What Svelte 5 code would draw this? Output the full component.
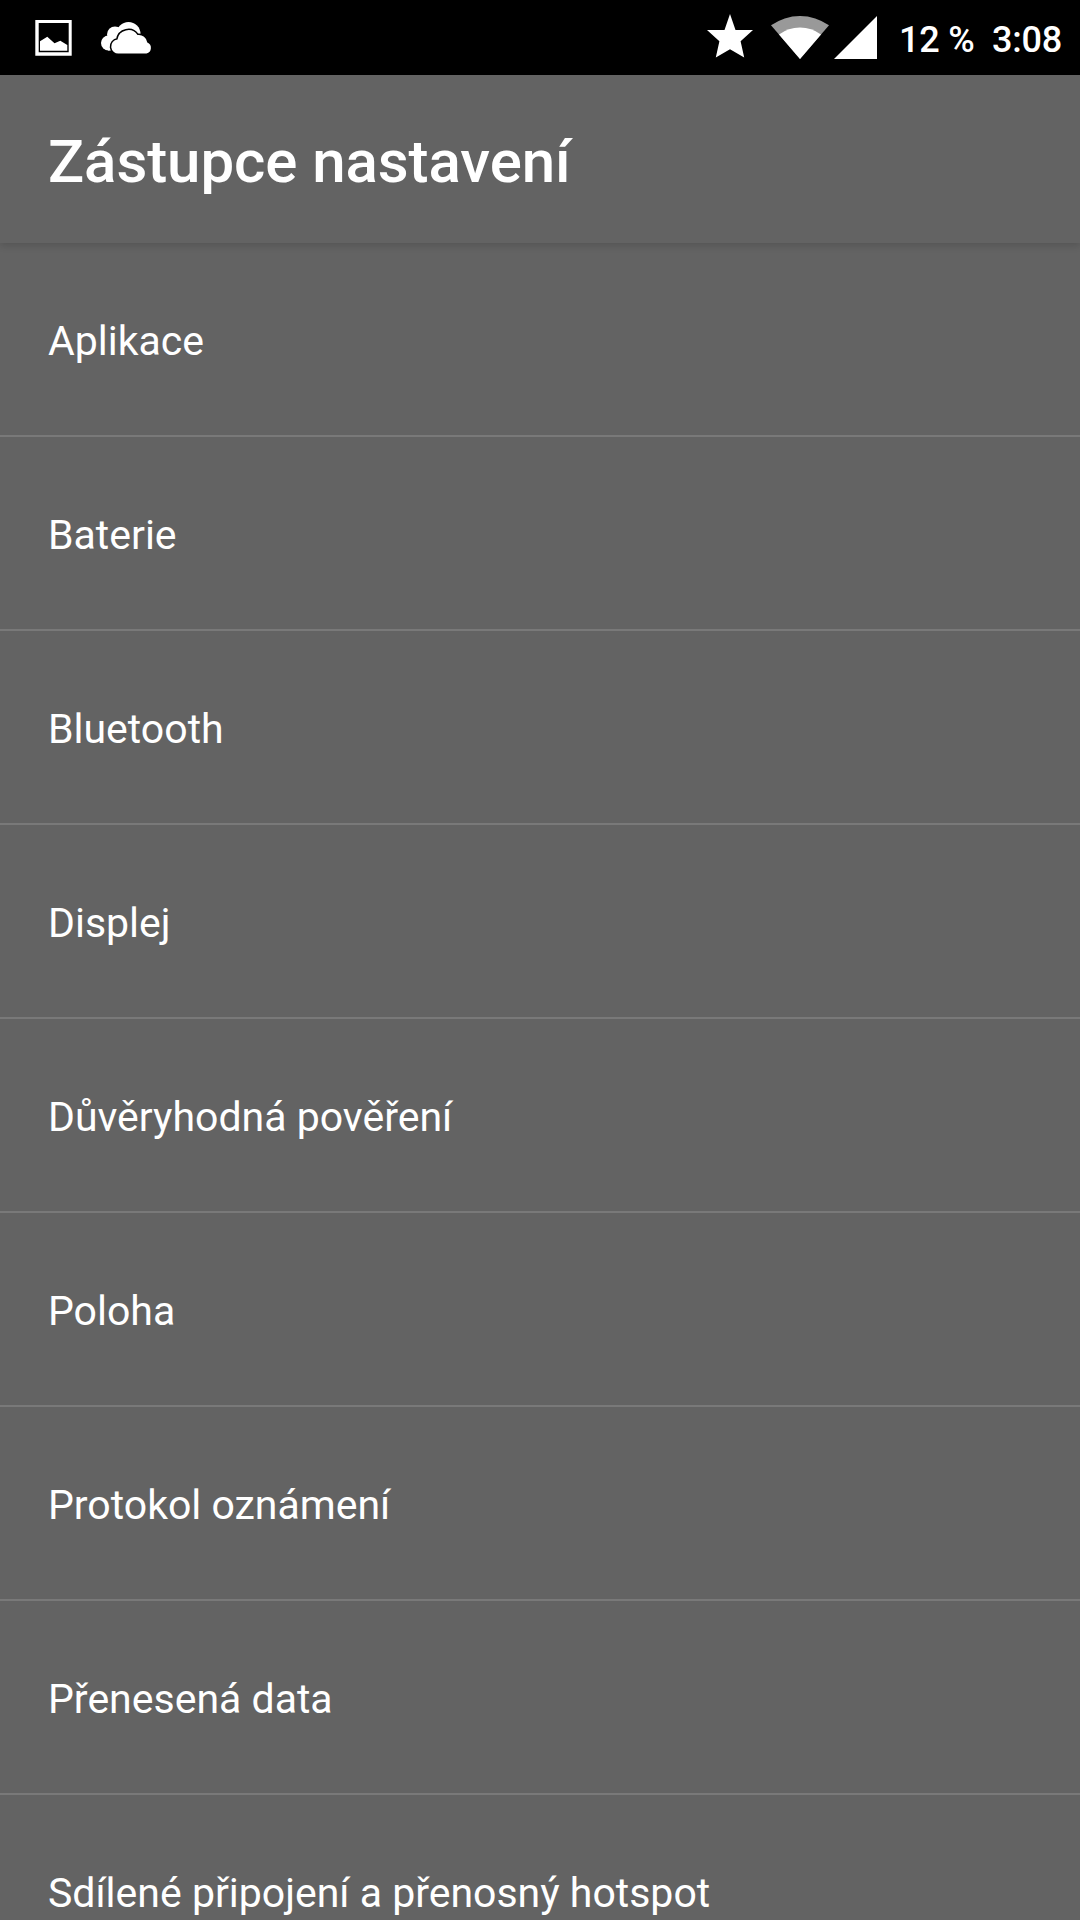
<script>
  const items = ['Aplikace', 'Baterie', 'Bluetooth', 'Displej', 'Důvěryhodná pověření', 'Poloha', 'Protokol oznámení', 'Přenesená data', 'Sdílené připojení a přenosný hotspot'];
</script>

<div class="screen">
  <div class="status">
    <svg class="icons" width="160" height="75" viewBox="0 0 160 75">
      <path fill="#fff" fill-rule="evenodd" d="M35.300 20H71.700V55.700H35.300ZM38.700 23V52.300H68.700V23ZM40 50.700V41.200L47.300 36.700L54.500 43.200L60.300 40.700L67.300 45V50.700Z" />
      <g fill="#fff">
        <circle cx="108.500" cy="43" r="7.500" />
        <circle cx="115" cy="34.500" r="8" />
        <circle cx="128.500" cy="34" r="12" />
        <rect x="108" y="36" width="20" height="14.500" />
      </g>
      <path
        fill="#fff"
        stroke="#000"
        stroke-width="3"
        paint-order="stroke"
        d="M119 53.500A7 7 0 0 1 117.500 39.500A11 11 0 0 1 137.500 35A8.500 8.500 0 0 1 147.300 42.500A5.800 5.800 0 0 1 146.500 53.500Z"
      />
    </svg>
    <div class="right">
      <svg class="icons" width="180" height="75" viewBox="700 0 180 75">
        <path fill="#fff" d="M730 14L735.500 30H753L740.600 41.200L744.200 57.600L730 49.200L715.800 57.600L719.400 41.200L707 30H724.500Z" />
        <path fill="#999" d="M800 59L771 25.300A50 50 0 0 1 829 25.300Z" />
        <path fill="#fff" d="M800 59L779 34.400A35 35 0 0 1 821 34.400Z" />
        <path fill="#fff" d="M834 59L877 16V59Z" />
      </svg>
      <span class="battery">12 %</span>
      <span class="clock">3:08</span>
    </div>
  </div>
  <header><h1>Zástupce nastavení</h1></header>
  <ul>
    {#each items as item}
      <li><span>{item}</span></li>
    {/each}
  </ul>
</div>

<style>
  :global(body) { margin: 0; overflow: hidden; }
  .screen { width: 1080px; height: 1920px; overflow: hidden; background: #636363; color: #fff; font-family: Roboto, sans-serif; display: flex; flex-direction: column; }
  .status { flex: none; height: 75px; background: #000; display: flex; justify-content: space-between; }
  .icons { flex: none; display: block; }
  .right { display: flex; align-items: center; width: 380px; font-size: 36px; font-weight: 500; white-space: nowrap; }
  .battery { width: 93px; padding: 4px 0 0 19px; letter-spacing: -0.2px; }
  .clock { padding-top: 4px; letter-spacing: -0.2px; }
  header { flex: none; box-sizing: border-box; height: 168px; display: flex; align-items: center; padding: 5px 0 0 48px; box-shadow: 0 3px 7px rgba(0, 0, 0, 0.14); }
  h1 { margin: 0; font-size: 60px; font-weight: 500; line-height: 72px; letter-spacing: -0.07px; }
  ul { margin: 0; padding: 0; list-style: none; }
  li { box-sizing: border-box; height: 194px; border-bottom: 2px solid #797979; padding: 4px 0 0 48px; display: flex; align-items: center; font-size: 41px; white-space: nowrap; }
</style>
